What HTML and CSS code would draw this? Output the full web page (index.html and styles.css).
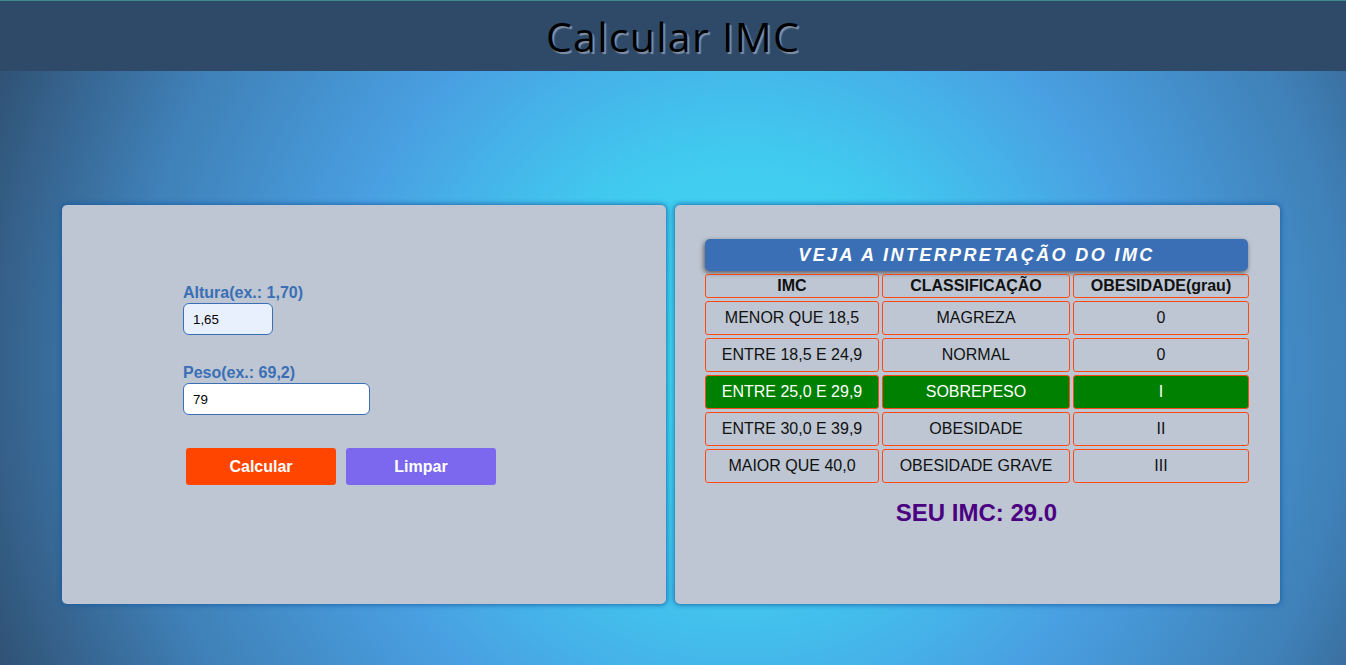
FILE: index.html
```html
<!DOCTYPE html>
<html lang="pt-BR">
<head>
<meta charset="utf-8">
<title>Calcular IMC</title>
<link rel="stylesheet" href="styles.css">
</head>
<body>
<header class="topbar">
  <h1 class="title">Calcular IMC</h1>
</header>
<main class="stage">
  <section class="panel panel-form">
    <div class="form">
      <label class="field-label" for="altura">Altura(ex.: 1,70)</label>
      <input class="field field-short field-filled" id="altura" type="text" value="1,65">
      <label class="field-label field-label-gap" for="peso">Peso(ex.: 69,2)</label>
      <input class="field field-long" id="peso" type="text" value="79">
      <div class="actions">
        <button class="btn btn-calc" type="button">Calcular</button>
        <button class="btn btn-clear" type="button">Limpar</button>
      </div>
    </div>
  </section>
  <section class="panel panel-result">
    <div class="result-head">VEJA A INTERPRETAÇÃO DO IMC</div>
    <table class="imc-table">
      <colgroup>
        <col class="c1"><col class="c2"><col class="c3">
      </colgroup>
      <thead>
        <tr><th>IMC</th><th>CLASSIFICAÇÃO</th><th>OBESIDADE(grau)</th></tr>
      </thead>
      <tbody>
        <tr><td>MENOR QUE 18,5</td><td>MAGREZA</td><td>0</td></tr>
        <tr><td>ENTRE 18,5 E 24,9</td><td>NORMAL</td><td>0</td></tr>
        <tr class="active"><td>ENTRE 25,0 E 29,9</td><td>SOBREPESO</td><td>I</td></tr>
        <tr><td>ENTRE 30,0 E 39,9</td><td>OBESIDADE</td><td>II</td></tr>
        <tr><td>MAIOR QUE 40,0</td><td>OBESIDADE GRAVE</td><td>III</td></tr>
      </tbody>
    </table>
    <p class="result-value">SEU IMC: 29.0</p>
  </section>
</main>
</body>
</html>
```
FILE: styles.css
```css
* { box-sizing: border-box; }
html, body { height: 100%; }
body {
  margin: 0;
  font-family: "Liberation Sans", Arial, sans-serif;
  background: radial-gradient(circle at 55% 55%, #3ee4f5 0%, #41c8ef 27%, #49a0e2 49%, #3f80b7 74%, #2e4b6b 100%);
  overflow: hidden;
}
.topbar {
  height: 71px;
  background: #2f4a69;
  border-top: 1px solid #3b8b8c;
  display: flex;
  justify-content: center;
  align-items: center;
}
.title {
  margin: 0;
  font-family: "Open Sans", sans-serif;
  font-weight: 500;
  font-size: 41px;
  letter-spacing: 1.3px;
  line-height: 1;
  color: #000;
  text-shadow: 2px 2px 1px #8090a6;
  padding-top: 1px;
}
.stage {
  display: flex;
  gap: 9px;
  padding: 134px 0 0 62px;
}
.panel {
  height: 399px;
  background: #bdc6d2;
  border-radius: 5px;
  box-shadow: 0 0 5px 1px rgba(20, 90, 160, 0.8);
}
.panel-form { width: 604px; padding: 79px 0 0 121px; }
.panel-result { width: 605px; padding: 34px 32px 0 30px; }
.form { display: flex; flex-direction: column; align-items: flex-start; }
.field-label {
  display: block;
  font-size: 16px;
  line-height: 17px;
  font-weight: bold;
  color: #3a6fb6;
  margin-bottom: 2px;
}
.field-label-gap { margin-top: 29px; }
.field {
  height: 32px;
  border: 1px solid #3a6fb6;
  border-radius: 6px;
  background: #fff;
  font-family: "Liberation Sans", Arial, sans-serif;
  font-size: 13.33px;
  color: #000;
  padding: 0 9px;
  outline: none;
}
.field-short { width: 90px; }
.field-long { width: 187px; }
.field-filled { background: #e8f0fe; }
.actions {
  display: flex;
  gap: 10px;
  margin: 33px 0 0 3px;
}
.btn {
  width: 150px;
  height: 37px;
  border: none;
  border-radius: 3px;
  color: #fff;
  font-family: "Liberation Sans", Arial, sans-serif;
  font-size: 16px;
  font-weight: bold;
}
.btn-calc { background: #ff4500; }
.btn-clear { background: #7b68ee; }

.result-head {
  height: 32px;
  background: #3a6fb6;
  border-radius: 5px;
  box-shadow: -1px 2px 5px rgba(0, 0, 0, 0.55);
  color: #fff;
  font-size: 18px;
  font-weight: bold;
  font-style: italic;
  letter-spacing: 2.4px;
  text-align: center;
  line-height: 32px;
}
.imc-table {
  border-collapse: separate;
  border-spacing: 3px;
  margin: 0 -3px;
  width: calc(100% + 6px);
  table-layout: fixed;
}
.c1 { width: 174px; }
.c2 { width: 188px; }
.c3 { width: 176px; }
.imc-table th, .imc-table td {
  border: 1px solid #ff4a14;
  border-radius: 3px;
  text-align: center;
  padding: 0;
  color: #111;
}
.imc-table th {
  height: 24px;
  font-size: 16px;
  font-weight: bold;
}
.imc-table td {
  height: 34px;
  font-size: 16px;
}
.imc-table tr.active td {
  background: #008000;
  color: #fff;
}
.result-value {
  margin: 13px 0 0;
  text-align: center;
  font-size: 24px;
  font-weight: bold;
  color: #4b0082;
  line-height: 27px;
}
```
